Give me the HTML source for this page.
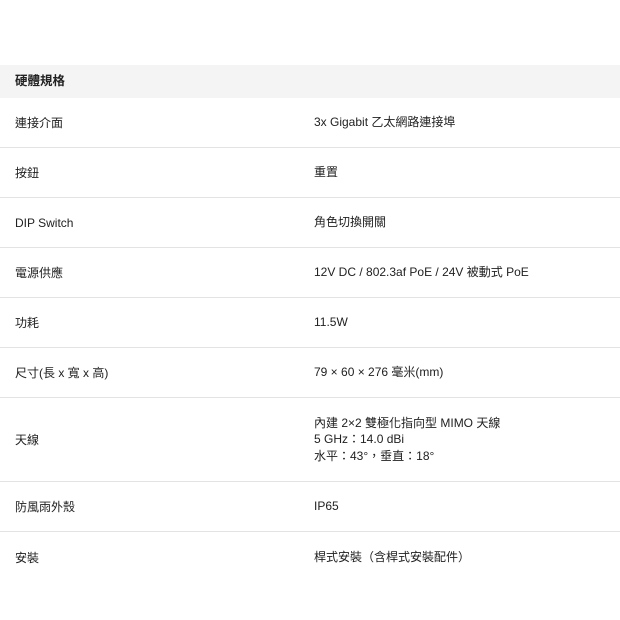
<!DOCTYPE html>
<html><head><meta charset="utf-8"><style>
body{margin:0;width:620px;height:620px;background:#fff;font-family:"Liberation Sans","Noto Sans CJK TC",sans-serif;font-size:12px;color:#212121;position:relative;overflow:hidden}
.hd{position:absolute;left:0;top:65px;width:620px;height:33px;background:#f4f4f5;font-weight:bold;line-height:33px;padding-left:15px;box-sizing:border-box;font-size:12.5px}
.r{position:absolute;left:0;width:620px;border-bottom:1px solid #e3e3e3;display:flex;align-items:center;box-sizing:border-box}
.r .k{position:absolute;left:15px}
.r .v{position:absolute;left:314px;line-height:16.5px}
</style></head><body>
<div class="hd">硬體規格</div>
<div class="r" style="top:98px;height:50px"><span class="k">連接介面</span><span class="v">3x Gigabit 乙太網路連接埠</span></div>
<div class="r" style="top:148px;height:50px"><span class="k">按鈕</span><span class="v">重置</span></div>
<div class="r" style="top:198px;height:50px"><span class="k">DIP Switch</span><span class="v">角色切換開關</span></div>
<div class="r" style="top:248px;height:50px"><span class="k">電源供應</span><span class="v">12V DC / 802.3af PoE / 24V 被動式 PoE</span></div>
<div class="r" style="top:298px;height:50px"><span class="k">功耗</span><span class="v">11.5W</span></div>
<div class="r" style="top:348px;height:50px"><span class="k">尺寸(長 x 寬 x 高)</span><span class="v">79 × 60 × 276 毫米(mm)</span></div>
<div class="r" style="top:398px;height:84px"><span class="k">天線</span><span class="v">內建 2×2 雙極化指向型 MIMO 天線<br>5 GHz：14.0 dBi<br>水平：43°，垂直：18°</span></div>
<div class="r" style="top:482px;height:50px"><span class="k">防風雨外殼</span><span class="v">IP65</span></div>
<div class="r" style="top:532px;height:50px;border-bottom:none"><span class="k">安裝</span><span class="v">桿式安裝（含桿式安裝配件）</span></div>
</body></html>
